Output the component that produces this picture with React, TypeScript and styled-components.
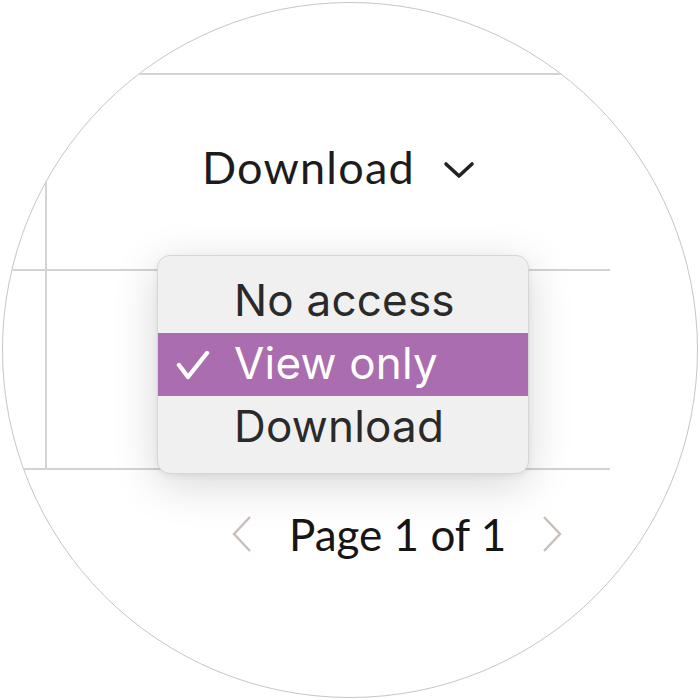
import React from "react";
import styled, { createGlobalStyle } from "styled-components";

const Global = createGlobalStyle`
  html, body { margin: 0; padding: 0; background: #ffffff; }
  body { width: 700px; height: 700px; overflow: hidden; }
`;

const Page = styled.div`
  width: 700px;
  height: 700px;
  padding: 2px;
  box-sizing: border-box;
`;

const Lens = styled.div`
  position: relative;
  width: 696px;
  height: 696px;
  box-sizing: border-box;
  border: 1px solid #c6c6c6;
  border-radius: 50%;
  overflow: hidden;
  background: #ffffff;
  padding-top: 70px;
`;

const Table = styled.div`
  width: 607px;
  display: grid;
  grid-template-columns: 44px 1fr;
  grid-template-rows: 196px 199px;
  border-top: 2px solid #d3d3d3;
`;

const Cell = styled.div<{ $first?: boolean }>`
  border-bottom: 2px solid #d3d3d3;
  border-right: ${(p) => (p.$first ? "2px solid #d3d3d3" : "none")};
`;

const HeaderCell = styled(Cell)`
  display: flex;
  align-items: flex-start;
  padding: 66px 0 0 155px;
  gap: 28px;
  font-family: Lato, "Open Sans", sans-serif;
  font-size: 45px;
  letter-spacing: 1.2px;
  line-height: 52px;
  color: #1c1c1c;
`;

const Chevron = styled.svg`
  margin-top: 20px;
  flex: none;
`;

const Menu = styled.div`
  position: absolute;
  left: 154px;
  top: 252px;
  width: 372px;
  height: 219px;
  box-sizing: border-box;
  padding: 14px 0 15px;
  background: #f0f0f0;
  border: 1px solid #d6d6d6;
  border-radius: 13px;
  box-shadow: 0 10px 45px rgba(0, 0, 0, 0.16), 0 2px 6px rgba(0, 0, 0, 0.06);
  font-family: Inter, "Liberation Sans", sans-serif;
  font-size: 44px;
`;

const Option = styled.div<{ $selected?: boolean }>`
  height: 63px;
  display: flex;
  align-items: center;
  background: ${(p) => (p.$selected ? "#aa6daf" : "transparent")};
  color: ${(p) => (p.$selected ? "#ffffff" : "#2a2a2a")};
  letter-spacing: 0.2px;
`;

const OptionText = styled.span`
  position: relative;
  top: -2px;
`;

const CheckSlot = styled.span`
  width: 76px;
  flex: none;
  display: flex;
  padding-left: 18px;
  box-sizing: border-box;
`;

const Pager = styled.div`
  display: flex;
  align-items: center;
  padding: 38px 0 0 228px;
  font-family: Lato, "Open Sans", sans-serif;
  font-size: 44px;
  line-height: 52px;
  color: #161616;
`;

const PagerLabel = styled.span`
  margin: 0 35px 0 36px;
`;

const NavArrow = styled.svg`
  flex: none;
`;

export default function App() {
  return (
    <>
      <Global />
      <Page>
        <Lens>
          <Table>
            <Cell $first />
            <HeaderCell>
              <span>Download</span>
              <Chevron width="32" height="18" viewBox="0 0 32 18">
                <path d="M3 3 L16 15 L29 3" fill="none" stroke="#222" strokeWidth="3.6" strokeLinecap="round" strokeLinejoin="round" />
              </Chevron>
            </HeaderCell>
            <Cell $first />
            <Cell />
          </Table>
          <Pager>
            <NavArrow width="22" height="38" viewBox="0 0 22 38">
              <path d="M19 2 L3 19 L19 36" fill="none" stroke="#c9bfba" strokeWidth="2.4" />
            </NavArrow>
            <PagerLabel>Page 1 of 1</PagerLabel>
            <NavArrow width="22" height="38" viewBox="0 0 22 38">
              <path d="M3 2 L19 19 L3 36" fill="none" stroke="#c9bfba" strokeWidth="2.4" />
            </NavArrow>
          </Pager>
          <Menu>
            <Option>
              <CheckSlot />
              <OptionText>No access</OptionText>
            </Option>
            <Option $selected>
              <CheckSlot>
                <svg width="34" height="30" viewBox="0 0 34 30">
                  <path d="M3 15 L12 27 L31 3" fill="none" stroke="#fff" strokeWidth="4.4" strokeLinecap="round" strokeLinejoin="round" />
                </svg>
              </CheckSlot>
              <OptionText>View only</OptionText>
            </Option>
            <Option>
              <CheckSlot />
              <OptionText>Download</OptionText>
            </Option>
          </Menu>
        </Lens>
      </Page>
    </>
  );
}
